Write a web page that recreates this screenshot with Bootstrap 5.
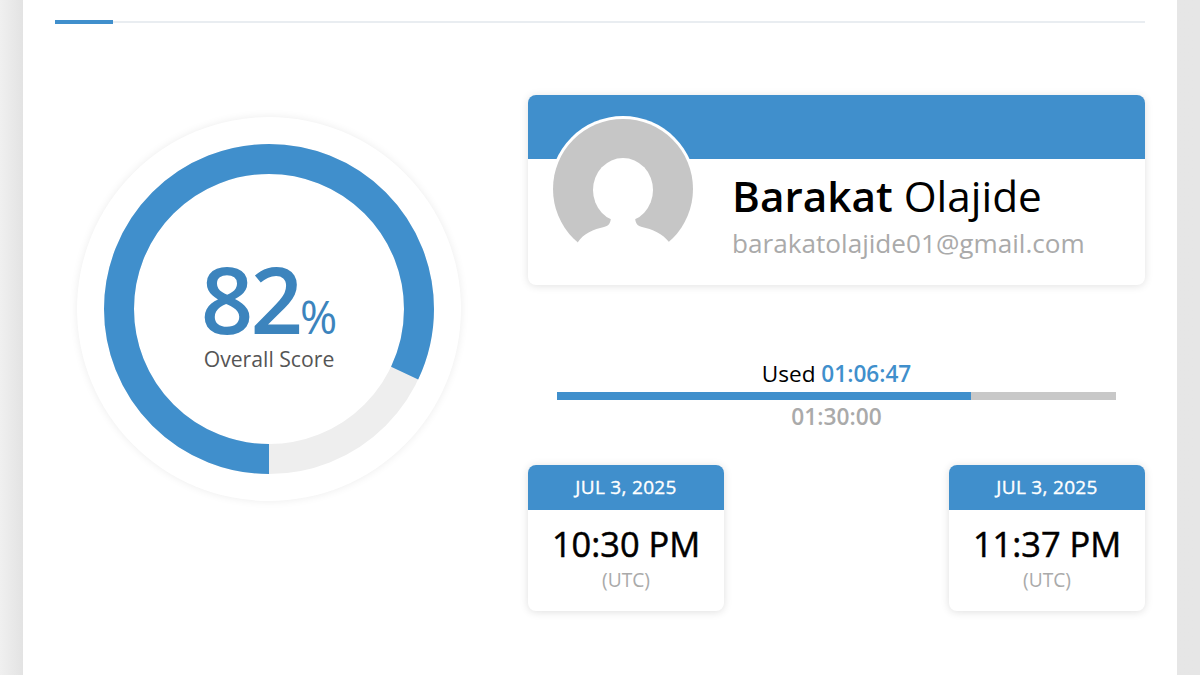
<!doctype html>
<html lang="en">
<head>
<meta charset="utf-8">
<title>Overall Score</title>
<link href="https://cdn.jsdelivr.net/npm/bootstrap@5.3.0/dist/css/bootstrap.min.css" rel="stylesheet">
<style>
html,body{height:675px;overflow:hidden}
body{background:linear-gradient(90deg,#f0f0f0,#e3e3e3 23px,#e6e6e6);font-family:"Open Sans",sans-serif;color:#000}
.sheet{margin:0 23px;height:675px;background:#fff;padding:20px 32px 0}
.tabline{height:4px;position:relative}
.tabline-rest{height:2px;background:#e9edf1;position:relative;top:1px}
.tabline-on{position:absolute;left:0;top:0;width:58px;height:4px;background:#408fcc}
.main-row{margin-top:71px}
.score-pane{width:473px;padding:22px 0 0 22px}
.disc{width:384px;height:384px;border-radius:50%;background:#fff;box-shadow:0 0 8px rgba(0,0,0,.08);display:grid;place-items:center}
.disc>*{grid-area:1/1}
.score-num{font-size:92px;line-height:1;font-weight:600;color:#3c84bd;letter-spacing:-3px;margin-top:6px}
.score-pct{font-size:45px;font-weight:400;letter-spacing:0}
.score-label{font-size:21.2px;line-height:24px;color:#555;margin-top:2px}
.info-pane{width:617px}
.profile{border-radius:8px;background:#fff;height:190px;box-shadow:0 1px 8px rgba(0,0,0,.12);overflow:hidden}
.profile-top{height:64px;background:#408fcc}
.profile-body{padding-left:22px;gap:36px}
.avatar{width:146px;height:146px;margin-top:-43px;flex:none}
.pname{font-size:42.3px;line-height:46px;margin-top:14px;font-weight:400}
.pname b{font-weight:600}
.pmail{font-size:26.15px;line-height:34px;color:#aaa;margin-top:7px}
.usage{margin:75px 29px 0;text-align:center}
.used{font-size:22.6px;line-height:28px}
.used span{color:#408fcc;font-weight:600}
.ubar{height:8px;background:#c8c8c8;margin-top:4px;border-radius:0}
.ubar .progress-bar{background:#408fcc}
.total{font-size:22.7px;line-height:30px;font-weight:600;color:#aaa;margin-top:2px}
.times{margin-top:33px}
.tcard{width:196px;height:146px;border-radius:8px;background:#fff;box-shadow:0 1px 8px rgba(0,0,0,.13);overflow:hidden;text-align:center}
.tdate{height:45px;background:#408fcc;color:#fff;font-size:19px;line-height:45px;font-weight:400;letter-spacing:.3px;-webkit-text-stroke:.35px #fff}
.ttime{font-size:34.4px;line-height:44px;font-weight:400;margin-top:12px;-webkit-text-stroke:.5px #000}
.tzone{font-size:19.2px;line-height:24px;color:#aaa;margin-top:2px}
</style>
</head>
<body>
<main class="sheet">
  <div class="tabline">
    <div class="tabline-rest"></div>
    <div class="tabline-on"></div>
  </div>
  <div class="main-row d-flex align-items-start">
    <section class="score-pane flex-shrink-0">
      <div class="disc">
        <svg width="330" height="330" viewBox="0 0 330 330">
          <circle cx="165" cy="165" r="150" fill="none" stroke="#eeeeee" stroke-width="30"/>
          <circle cx="165" cy="165" r="150" fill="none" stroke="#408fcc" stroke-width="30" stroke-dasharray="772.8 942.5" transform="rotate(90 165 165)"/>
        </svg>
        <div class="text-center">
          <div class="score-num">82<span class="score-pct">%</span></div>
          <div class="score-label">Overall Score</div>
        </div>
      </div>
    </section>
    <section class="info-pane ms-auto">
      <div class="profile">
        <div class="profile-top"></div>
        <div class="profile-body d-flex">
          <svg class="avatar" viewBox="0 0 146 146">
            <circle cx="73" cy="73" r="73" fill="#fff"/>
            <circle cx="73" cy="73" r="70" fill="#c6c6c6"/>
            <ellipse cx="73" cy="74" rx="30" ry="32" fill="#fff"/>
            <path d="M28 126C33 118 44 113 54 111C58 110 61 108 61 100L85 100C85 108 88 110 92 111C102 113 113 118 119 126L119 146L28 146Z" fill="#fff"/>
          </svg>
          <div>
            <div class="pname"><b>Barakat</b> Olajide</div>
            <div class="pmail">barakatolajide01@gmail.com</div>
          </div>
        </div>
      </div>
      <div class="usage">
        <div class="used">Used <span>01:06:47</span></div>
        <div class="progress ubar"><div class="progress-bar" style="width:74.1%"></div></div>
        <div class="total">01:30:00</div>
      </div>
      <div class="times d-flex justify-content-between">
        <div class="tcard">
          <div class="tdate">JUL 3, 2025</div>
          <div class="ttime">10:30 PM</div>
          <div class="tzone">(UTC)</div>
        </div>
        <div class="tcard">
          <div class="tdate">JUL 3, 2025</div>
          <div class="ttime">11:37 PM</div>
          <div class="tzone">(UTC)</div>
        </div>
      </div>
    </section>
  </div>
</main>
<script src="https://cdn.jsdelivr.net/npm/bootstrap@5.3.0/dist/js/bootstrap.bundle.min.js"></script>
</body>
</html>
